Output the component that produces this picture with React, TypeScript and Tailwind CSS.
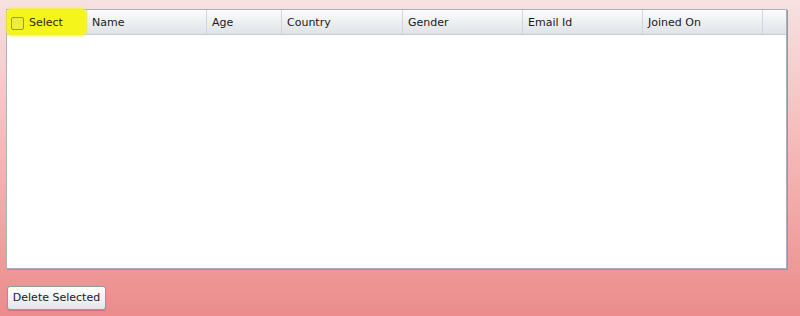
const columns = [
  { label: "Name", w: "w-[120px]" },
  { label: "Age", w: "w-[75px]" },
  { label: "Country", w: "w-[121px]" },
  { label: "Gender", w: "w-[120px]" },
  { label: "Email Id", w: "w-[120px]" },
  { label: "Joined On", w: "w-[120px]" },
];

export default function App() {
  return (
    <div
      className="w-[800px] h-[316px] bg-gradient-to-b from-[#f7e1e1] to-[#ec8b8b] pt-[9px] pl-[6px] text-[11px] text-[#1a1a1a]"
      style={{ fontFamily: '"DejaVu Sans", Verdana, sans-serif' }}
    >
      <div className="w-[781px] h-[260px] bg-white border border-[#a9b2ba] shadow-[1px_1px_0_#8e9aa4] flex flex-col">
        <div className="h-[25px] flex border-b border-[#c5cbd1] bg-gradient-to-b from-[#fbfcfc] to-[#dfe3e7]">
          <div className="w-[80px] relative flex items-center border-r border-[#d2d6da]">
            <div className="absolute left-[-1px] top-[-2px] w-[81px] h-[28px] rounded-[6px] bg-[#f5f51c] blur-[1px]" />
            <div className="relative flex items-center pl-[4px] gap-[5px]">
              <span className="w-[13px] h-[13px] mt-[2px] rounded-[2px] border border-[#9b9b30] bg-[#eeee3a]" />
              <span className="pt-[3px] text-[#2a2a00]">Select</span>
            </div>
          </div>
          {columns.map((c) => (
            <div key={c.label} className={`${c.w} flex items-center pl-[5px] pt-[3px] border-r border-[#d2d6da]`}>
              {c.label}
            </div>
          ))}
          <div className="flex-1" />
        </div>
        <div className="flex-1" />
      </div>
      <button className="mt-[17px] ml-[1px] w-[99px] h-[24px] pt-[1px] rounded-[3px] border border-[#8f9aa3] bg-gradient-to-b from-white to-[#e3e6e9] text-[#222] shadow-[0_1px_1px_rgba(0,0,0,0.15)]">
        Delete Selected
      </button>
    </div>
  );
}
